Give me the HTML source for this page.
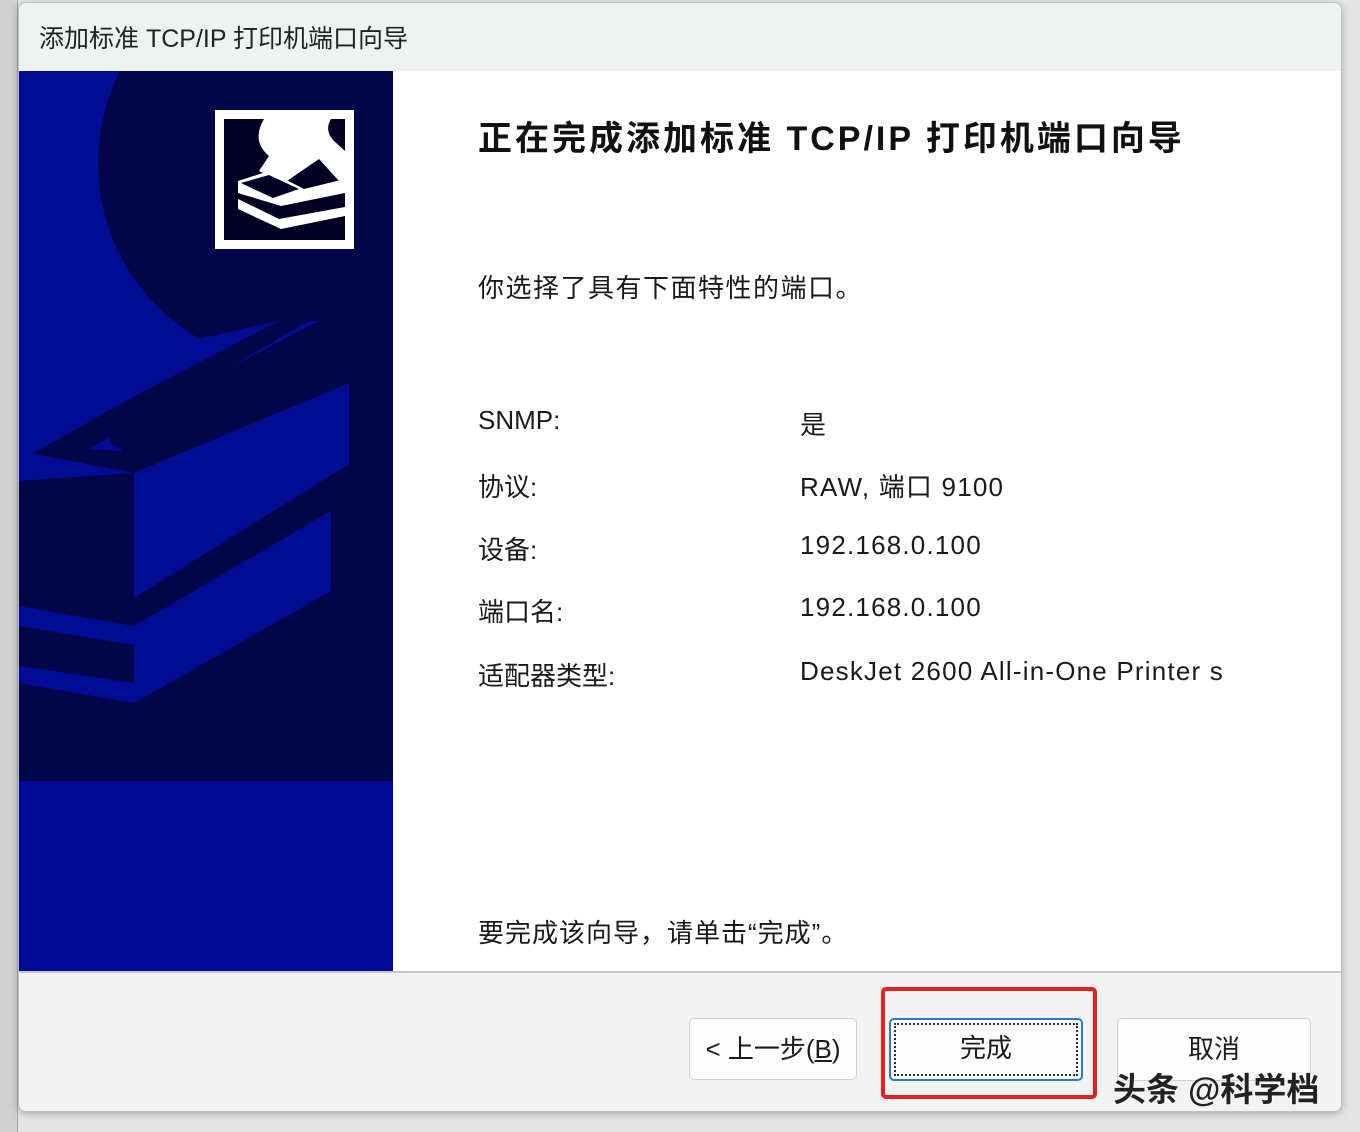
<!DOCTYPE html>
<html><head><meta charset="utf-8"><style>
*{margin:0;padding:0;box-sizing:border-box}
body{width:1360px;height:1132px;background:#e4e4e4;position:relative;overflow:hidden;font-family:"Liberation Sans","Noto Sans CJK SC",sans-serif;color:#1a1a1a}
.edge{position:absolute;left:0;top:0;width:18px;height:1132px;background:#d0d0d0;border-right:1px solid #aaa}
.win{position:absolute;left:18px;top:2px;width:1324px;height:1110px;background:#fff;border:1px solid #bfbfbf;border-radius:8px;overflow:hidden;box-shadow:0 2px 8px rgba(0,0,0,.25)}
.title{position:absolute;left:0;top:0;width:100%;height:68px;background:#eef3f1;font-size:25px;padding:16px 0 0 20px;color:#222}
.left{position:absolute;left:0;top:68px;width:374px;height:900px}
.t{position:absolute;white-space:nowrap}
.v{letter-spacing:1.2px}
.foot{position:absolute;left:0;top:968px;width:100%;height:142px;background:#f3f3f3;border-top:2px solid #c8c8c8}
.btn{position:absolute;background:#fdfdfd;border:1px solid #d0d0d0;border-radius:5px;font-size:26px;text-align:center}
</style></head><body>
<div class="edge"></div>
<div class="win">
<div class="title">添加标准 TCP/IP 打印机端口向导</div>
<svg class="left" viewBox="0 0 374 900" width="374" height="900">
<rect width="374" height="900" fill="#000c93"/>
<circle cx="282" cy="92" r="203" fill="#020548"/>
<rect x="280" y="0" width="94" height="710" fill="#020548"/>
<polygon points="0,390 250,250 374,250 374,710 0,710" fill="#020548"/>
<polygon points="0,310 170,270 260,250 0,385" fill="#000c93"/>
<polygon points="70,378 290,250 330,250 100,380" fill="#000c93"/>
<polygon points="0,380 115,402 330,312 330,393 115,527 115,402 0,410" fill="#000c93"/>
<polygon points="85,362 300,250 330,250 330,262 110,380 95,375" fill="#020548"/>
<polygon points="0,535 115,555 312,440 312,520 115,632 0,612 0,595 115,612 115,574 0,555" fill="#000c93"/>
<rect x="0" y="710" width="374" height="190" fill="#000a96"/>
<rect x="196" y="39" width="139" height="139" fill="#fff"/>
<rect x="205" y="48" width="121" height="121" fill="#000022"/>
<path d="M245 48 Q232 70 250 85 L240 100 L265 112 L300 88 L320 110 L326 108 L326 80 L315 70 Q305 60 312 48 Z" fill="#fff"/>
<polygon points="219,110 250,100 285,118 326,108 326,122 262,135 219,122" fill="#fff"/>
<polygon points="219,128 260,148 326,136 326,145 262,158 219,138" fill="#fff"/>
<polygon points="222,112 250,104 280,118 254,127" fill="#000022"/>
</svg>
<div class="t" style="left:459px;top:108px;font-size:34px;font-weight:bold;color:#111;letter-spacing:3px">正在完成添加标准 TCP/IP 打印机端口向导</div>
<div class="t" style="left:459px;top:265px;font-size:26px;letter-spacing:1.5px">你选择了具有下面特性的端口。</div>
<div class="t" style="left:459px;top:402px;font-size:26px">SNMP:</div><div class="t v" style="left:781px;top:402px;font-size:26px">是</div>
<div class="t" style="left:459px;top:464px;font-size:26px">协议:</div><div class="t v" style="left:781px;top:464px;font-size:26px">RAW, 端口 9100</div>
<div class="t" style="left:459px;top:527px;font-size:26px">设备:</div><div class="t v" style="left:781px;top:527px;font-size:26px">192.168.0.100</div>
<div class="t" style="left:459px;top:589px;font-size:26px">端口名:</div><div class="t v" style="left:781px;top:589px;font-size:26px">192.168.0.100</div>
<div class="t" style="left:459px;top:653px;font-size:26px">适配器类型:</div><div class="t v" style="left:781px;top:653px;font-size:26px">DeskJet 2600 All-in-One Printer s</div>
<div class="t" style="left:459px;top:910px;font-size:26px;letter-spacing:1px">要完成该向导，请单击“完成”。</div>
<div class="foot"></div>
<div class="btn" style="left:670px;top:1015px;width:168px;height:62px;line-height:60px">&lt; 上一步(<u>B</u>)</div>
<div class="btn" style="left:870px;top:1015px;width:194px;height:63px;line-height:57px;border:2px solid #2a7bd0"><div style="position:absolute;left:3px;top:3px;right:3px;bottom:3px;border:2px dotted #333"></div>完成</div>
<div class="btn" style="left:1098px;top:1015px;width:194px;height:63px;line-height:60px">取消</div>
<div style="position:absolute;left:862px;top:984px;width:216px;height:112px;border:4px solid #e8201a;border-radius:5px"></div>
<div class="t" style="left:1094px;top:1060px;font-size:33px;font-weight:bold;color:#222;text-shadow:0 0 2px #fff,0 0 2px #fff">头条 @科学档</div>
</div>
</body></html>
